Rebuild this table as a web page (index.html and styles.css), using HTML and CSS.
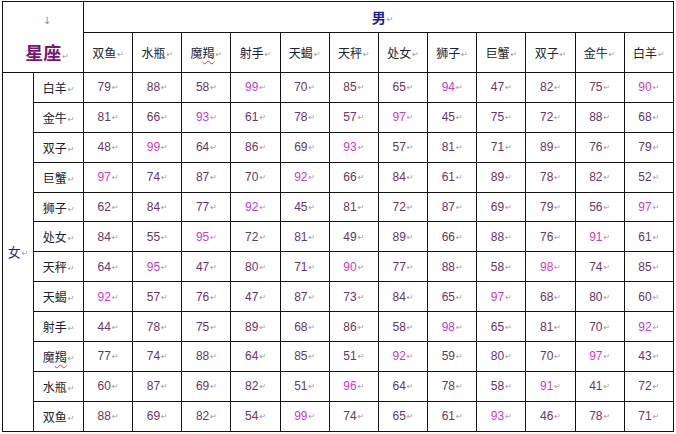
FILE: index.html
```html
<!DOCTYPE html>
<html lang="zh">
<head>
<meta charset="utf-8">
<link rel="stylesheet" href="styles.css">
</head>
<body>
<table class="grid">
  <colgroup>
    <col class="c-sex"><col class="c-name">
    <col><col><col><col><col><col><col><col><col><col><col><col>
  </colgroup>
  <thead>
    <tr class="r-top">
      <th class="corner" colspan="2" rowspan="2">
        <div class="down">↓</div>
        <div class="title">星座<span class="pm">↵</span></div>
      </th>
      <th class="male" colspan="12">男<span class="pm">↵</span></th>
    </tr>
    <tr class="r-head" id="headrow"></tr>
  </thead>
  <tbody id="body"></tbody>
</table>
<script src="app.js"></script>
</body>
</html>
```

FILE: styles.css
```css
html, body {
  margin: 0;
  padding: 0;
  background: #ffffff;
}
body {
  padding: 1px 0 0 2px;
  font-family: "Liberation Sans", "Noto Sans CJK SC", sans-serif;
}
.grid {
  border-collapse: collapse;
  table-layout: fixed;
  width: 672px;
}
.c-sex { width: 31px; }
.c-name { width: 50px; }
.grid th, .grid td {
  border: 1px solid #111111;
  padding: 0;
  text-align: center;
  vertical-align: middle;
  font-weight: normal;
}
.r-top { height: 31px; }
.r-head { height: 40px; }
.grid tbody tr { height: 29.9px; }
.pm {
  font-family: "DejaVu Sans", sans-serif;
  font-size: 8px;
  color: #9a9a9a;
  font-weight: normal;
  margin-left: 1px;
  vertical-align: 1px;
}
.corner {
  vertical-align: top;
}
.down {
  font-family: "DejaVu Sans", sans-serif;
  font-size: 10px;
  color: #8a8a8a;
  margin-top: 8px;
  line-height: 12px;
  padding-left: 8px;
}
.title {
  margin-top: 14px;
  font-family: "Noto Sans CJK SC", sans-serif;
  font-size: 18px;
  font-weight: bold;
  line-height: 22px;
  color: #7a1478;
  padding-left: 8px;
}
.male {
  font-family: "Noto Sans CJK SC", sans-serif;
  font-size: 14px;
  font-weight: bold !important;
  color: #1c1ca0;
  padding-left: 8px !important;
}
.cname {
  font-family: "Noto Sans CJK SC", sans-serif;
  font-size: 12px;
  color: #1a2430;
}
.sex {
  font-family: "Noto Sans CJK SC", sans-serif;
  font-size: 13px;
  font-weight: bold;
  color: #1c1ca0;
}
.num {
  font-family: "Liberation Sans", sans-serif;
  font-size: 12px;
  color: #6a3566;
}
.num.hi {
  color: #cc3acc;
}
.wavy {
  text-decoration: underline wavy #e03030;
  text-decoration-thickness: 1px;
  text-underline-offset: 2px;
}
```

FILE: app.js
```js
const names = ["双鱼","水瓶","魔羯","射手","天蝎","天秤","处女","狮子","巨蟹","双子","金牛","白羊"];
const rows = [
  ["白羊",[79,88,58,99,70,85,65,94,47,82,75,90]],
  ["金牛",[81,66,93,61,78,57,97,45,75,72,88,68]],
  ["双子",[48,99,64,86,69,93,57,81,71,89,76,79]],
  ["巨蟹",[97,74,87,70,92,66,84,61,89,78,82,52]],
  ["狮子",[62,84,77,92,45,81,72,87,69,79,56,97]],
  ["处女",[84,55,95,72,81,49,89,66,88,76,91,61]],
  ["天秤",[64,95,47,80,71,90,77,88,58,98,74,85]],
  ["天蝎",[92,57,76,47,87,73,84,65,97,68,80,60]],
  ["射手",[44,78,75,89,68,86,58,98,65,81,70,92]],
  ["魔羯",[77,74,88,64,85,51,92,59,80,70,97,43]],
  ["水瓶",[60,87,69,82,51,96,64,78,58,91,41,72]],
  ["双鱼",[88,69,82,54,99,74,65,61,93,46,78,71]]
];
const pm = '<span class="pm">↵</span>';
function label(n){
  if (n === "魔羯") return '魔<span class="wavy">羯</span>' + pm;
  return n + pm;
}
document.getElementById("headrow").innerHTML =
  names.map(n => '<th class="cname">' + label(n) + '</th>').join("");
document.getElementById("body").innerHTML = rows.map((r, i) => {
  let h = '<tr>';
  if (i === 0) h += '<td class="sex" rowspan="12">女' + pm + '</td>';
  h += '<td class="cname">' + label(r[0]) + '</td>';
  h += r[1].map(v => '<td class="num' + (v >= 90 ? ' hi' : '') + '">' + v + pm + '</td>').join("");
  return h + '</tr>';
}).join("");
```
